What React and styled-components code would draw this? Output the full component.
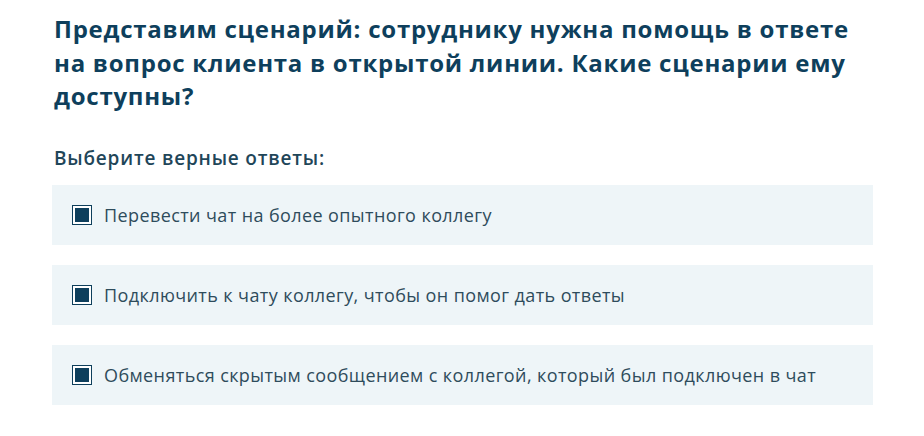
import React from "react";
import styled, { createGlobalStyle } from "styled-components";

const GlobalStyle = createGlobalStyle`
  body {
    margin: 0;
    background: #fff;
    font-family: "Open Sans", "Noto Sans", sans-serif;
  }
`;

const answers = [
  { id: 1, text: "Перевести чат на более опытного коллегу", checked: true },
  { id: 2, text: "Подключить к чату коллегу, чтобы он помог дать ответы", checked: true },
  {
    id: 3,
    text: "Обменяться скрытым сообщением с коллегой, который был подключен в чат",
    checked: true,
  },
];

const App = () => {
  return (
    <>
      <GlobalStyle />
      <Wrapper>
        <Question>
          Представим сценарий: сотруднику нужна помощь в ответе на вопрос клиента в открытой линии. Какие сценарии ему доступны?
        </Question>
        <Hint>Выберите верные ответы:</Hint>
        <List>
          {answers.map((a) => (
            <Option key={a.id}>
              <Box $checked={a.checked} />
              <OptionText>{a.text}</OptionText>
            </Option>
          ))}
        </List>
      </Wrapper>
    </>
  );
};

const Wrapper = styled.div`
  width: 821px;
  padding: 12px 0 0 52px;
`;

const Question = styled.h2`
  margin: 0 0 0 2px;
  width: 810px;
  font-size: 24px;
  line-height: 33.5px;
  font-weight: 700;
  letter-spacing: 0.75px;
  color: #0e3f5c;
`;

const Hint = styled.div`
  margin: 33px 0 0 2px;
  font-size: 19px;
  line-height: 24px;
  font-weight: 600;
  letter-spacing: 0.8px;
  color: #1f4659;
`;

const List = styled.div`
  display: flex;
  flex-direction: column;
  gap: 20px;
  margin-top: 15px;
`;

const Option = styled.div`
  display: flex;
  align-items: center;
  height: 60px;
  padding-left: 20px;
  background: #eef5f8;
`;

const Box = styled.span`
  box-sizing: border-box;
  width: 20px;
  height: 20px;
  flex-shrink: 0;
  border: 1.5px solid #0e3f5c;
  background: #fff;
  padding: 2px;
  display: flex;

  &::after {
    content: "";
    flex: 1;
    background: ${(p) => (p.$checked ? "#0e3f5c" : "transparent")};
  }
`;

const OptionText = styled.span`
  margin-left: 12px;
  font-size: 18px;
  letter-spacing: 0.4px;
  color: #2e4c5c;
`;

export default App;
